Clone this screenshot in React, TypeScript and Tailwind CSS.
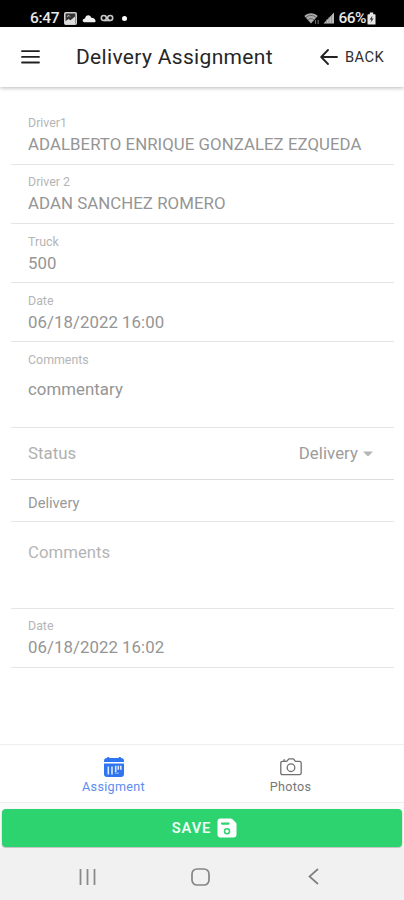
// App.tsx

import type { ReactNode } from 'react';

interface FieldProps {
  label: string;
  value: string;
  className?: string;
  valueClassName?: string;
}

// Stacked label + value, used by all read-only inputs
const Field = ({ label, value, className = 'h-[59px] pt-[10px]', valueClassName = 'mt-[3px]' }: FieldProps) => (
  <div className={`border-b border-[#e4e4e4] pl-[17px] ${className}`}>
    <p className="text-[12.4px] leading-[15px] text-[#b5b5b5]">{label}</p>
    <p className={`whitespace-nowrap text-[16.8px] leading-[22px] tracking-[0.06px] text-[#959595] ${valueClassName}`}>{value}</p>
  </div>
);

const StatusBar = () => (
  <div className="flex h-[27px] shrink-0 items-center bg-black pl-[30px] pr-[28px] pt-[9px] text-[#e8e8e8]">
    <span className="text-[15.5px] font-medium leading-[18px] tracking-[-0.3px]">6:47</span>
    <svg className="ml-[5px]" width="13" height="13" viewBox="0 0 13 13" fill="none">
      <rect x="0.8" y="0.8" width="11.4" height="11.4" rx="1" fill="#333" stroke="#d0d0d0" strokeWidth="1.6" />
      <path d="M1 12V9.5L4.5 7l2 1.2L11 4.5V12z" fill="#ddd" />
      <path d="M3 4.5l2-1 1 1" stroke="#ccc" strokeWidth="1" />
    </svg>
    <svg className="ml-[5px]" width="14" height="9" viewBox="0 0 14 9" fill="#f0f0f0">
      <path d="M2.5 8.2C0 8.2 0 5 3 4.6 3.4 0.4 8.6 0 9.3 3.8c2-.2 3.5.8 4.2 2.6.3 1-.2 1.8-1.2 1.8z" />
    </svg>
    <svg className="ml-[4px]" width="14" height="8" viewBox="0 0 14 8" fill="none" stroke="#c8c8c8" strokeWidth="1.6">
      <circle cx="3.8" cy="4" r="2.5" />
      <circle cx="10.2" cy="4" r="2.5" />
      <path d="M3.8 6.5h6.4" />
    </svg>
    <span className="ml-[8px] size-[5px] rounded-full bg-white" />
    <svg className="ml-auto" width="16" height="13" viewBox="0 0 16 13">
      <path d="M0.3 4C4 .4 10 .4 13.7 4L7 11.5z" fill="#aaa" />
      <path d="M2 5.4c3-2.6 7-2.6 10 0M4.2 7.7c2-1.5 3.8-1.5 5.6 0" fill="none" stroke="#333" strokeWidth="0.6" />
      <path d="M11.5 8v4M14.2 8v4" stroke="#666" strokeWidth="1.2" />
    </svg>
    <svg className="ml-[3px]" width="12" height="12" viewBox="0 0 12 12">
      <path d="M0.5 11.5L11 0.5v11z" fill="#bbb" />
      <path d="M3.5 7v5M6 5v7M8.5 3v9" stroke="#777" strokeWidth="0.5" />
    </svg>
    <span className="ml-[3px] text-[15.5px] font-medium leading-[18px] tracking-[-0.5px]">66%</span>
    <svg className="ml-px" width="9" height="13" viewBox="0 0 9 13">
      <path d="M2.8 0.5h3.4v1.7h1.6q.7 0 .7.7v9q0 .7-.7.7H1.2q-.7 0-.7-.7v-9q0-.7.7-.7h1.6z" fill="#e8e8e8" />
      <path d="M5.5 3.5L2.6 7.5h1.8l-.8 3.2 3-4.2H4.8z" fill="#333" />
    </svg>
  </div>
);

const CalendarIcon = () => (
  <svg width="22" height="22" viewBox="0 0 22 22" fill="#2f74f0">
    <path d="M4.2 1h2v1h9.6V1h2v1H18q3 0 3 3v1H1V5q0-3 3-3h.2z" />
    <path d="M1 7.4h20V18q0 3-3 3H4q-3 0-3-3z" />
    <path d="M5.3 10.5v8M9 10.5v8M12.7 9.8v6.5M15.3 9.8v4M17.8 9.8v4" stroke="#dbe8ff" strokeWidth="1.6" />
    <path d="M12 17.2h4" stroke="#8fb4f8" strokeWidth="1.2" />
  </svg>
);

const CameraIcon = () => (
  <svg width="22" height="18" viewBox="0 0 22 18" fill="none" stroke="#707070" strokeWidth="1.3">
    <path d="M2.5 3.3h3.8q.7 0 1.1-.7l.7-1q.4-.8 1.2-.8h3.6q.8 0 1.2.8l.7 1q.4.7 1.1.7h3.6q1.7 0 1.7 1.7v10q0 1.7-1.7 1.7h-17Q.8 16.7.8 15V5q0-1.7 1.7-1.7z" />
    <circle cx="11" cy="9.7" r="3.8" />
    <path d="M3.2 2.1h2" />
  </svg>
);

const SaveIcon = () => (
  <svg width="20" height="20" viewBox="0 0 20 20">
    <path d="M3.5 0.5h10.2q1 0 1.7.7l3.4 3.4q.7.7.7 1.7v10.2q0 3-3 3h-13q-3 0-3-3v-13q0-3 3-3z" fill="#fff" />
    <path d="M5 5.6h6.5" stroke="#2dd36f" strokeWidth="2.2" strokeLinecap="round" />
    <circle cx="10" cy="13.2" r="2.5" fill="none" stroke="#2dd36f" strokeWidth="1.5" />
  </svg>
);

interface TabProps {
  label: string;
  icon: ReactNode;
  className: string;
}

const Tab = ({ label, icon, className }: TabProps) => (
  <button className={`flex w-[168px] flex-col items-center pt-[11px] ${className}`}>
    <span className="flex h-[22px] items-center">{icon}</span>
    <span className="mt-px text-[12.6px] leading-[15px] tracking-[0.3px]">{label}</span>
  </button>
);

export default function App() {
  return (
    <div className="flex h-[900px] w-[404px] flex-col overflow-hidden bg-white font-['Roboto',sans-serif]">
      <StatusBar />

      {/* --- Toolbar --- */}
      <header className="flex h-[60px] shrink-0 items-center pl-[21px] pr-[20px] shadow-[0_1px_4px_rgba(0,0,0,0.28)]">
        <svg width="19" height="14" viewBox="0 0 19 14" stroke="#222" strokeWidth="1.8" strokeLinecap="round">
          <path d="M1 1.2h17M1 6.9h17M1 12.5h17" />
        </svg>
        <h1 className="ml-[36px] whitespace-nowrap pt-[2px] text-[21px] font-[450] tracking-[0.33px] text-[#262626]">Delivery Assignment</h1>
        <button className="ml-auto flex items-center gap-[7px] text-[14.7px] font-[450] tracking-[0.4px] text-[#303030]">
          <svg width="18" height="16" viewBox="0 0 18 16" fill="none" stroke="#222" strokeWidth="1.8" strokeLinecap="round" strokeLinejoin="round">
            <path d="M8 1L1.2 8 8 15M1.5 8h15.5" />
          </svg>
          BACK
        </button>
      </header>

      {/* --- Form --- */}
      <main className="flex-1 pl-[11px] pr-[10px] pt-[19px]">
        <Field label="Driver1" value="ADALBERTO ENRIQUE GONZALEZ EZQUEDA" className="h-[59px] pt-[9px]" />
        <Field label="Driver 2" value="ADAN SANCHEZ ROMERO" className="h-[59px] pt-[9px]" />
        <Field label="Truck" value="500" />
        <Field label="Date" value="06/18/2022 16:00" />
        <Field label="Comments" value="commentary" className="h-[86px] pt-[10px]" valueClassName="mt-[11px]" />
        <div className="flex h-[52px] items-center border-b border-[#dcdcdc] pl-[17px] pr-[21px] text-[16.8px] tracking-[0.06px]">
          <span className="text-[#b0b0b0]">Status</span>
          <span className="ml-auto text-[#9c9c9c]">Delivery</span>
          <svg className="ml-[5px]" width="10" height="6" viewBox="0 0 10 6" fill="#b5b5b5">
            <path d="M0 0.5h10L5 5.5z" />
          </svg>
        </div>
        <div className="h-[42px] border-b border-[#e6e6e6] pl-[17px] pt-[12px] text-[14.7px] leading-[22px] text-[#999]">Delivery</div>
        <div className="h-[87px] border-b border-[#e6e6e6] pl-[17px] pt-[19px] text-[16.8px] leading-[22px] text-[#b5b5b5]">Comments</div>
        <Field label="Date" value="06/18/2022 16:02" className="h-[59px] pt-[9px]" />
      </main>

      {/* --- Bottom tabs --- */}
      <nav className="flex h-[59px] shrink-0 justify-center gap-[9px] border-y border-[#eeeeee]">
        <Tab label="Assigment" icon={<CalendarIcon />} className="text-[#5b8def]" />
        <Tab label="Photos" icon={<CameraIcon />} className="text-[#777]" />
      </nav>

      <div className="h-[45px] shrink-0 bg-[#fbfbfb] px-[2px] pt-[6px]">
        <button className="flex h-[38px] w-full items-center justify-center gap-[6px] rounded-[4px] bg-[#2dd36f] pl-[5px] text-[14.7px] font-semibold tracking-[0.9px] text-[#effff5] shadow-[0_1px_2px_rgba(0,0,0,0.3)]">
          SAVE
          <SaveIcon />
        </button>
      </div>

      {/* --- Android navigation --- */}
      <footer className="flex h-[52px] shrink-0 items-center bg-[#f1f1f1] pl-[79px] pt-[5px]">
        <svg width="17" height="16" viewBox="0 0 17 16" stroke="#8a8a8a" strokeWidth="1.8">
          <path d="M1.5 0v16M8.5 0v16M15.5 0v16" />
        </svg>
        <svg className="ml-[95px]" width="19" height="18" viewBox="0 0 19 18" fill="none" stroke="#858585" strokeWidth="1.7">
          <rect x="1" y="1" width="17" height="16" rx="5" />
        </svg>
        <svg className="ml-[98px]" width="11" height="17" viewBox="0 0 11 17" fill="none" stroke="#808080" strokeWidth="1.7">
          <path d="M10 1L1.5 8.5 10 16" />
        </svg>
      </footer>
    </div>
  );
}
